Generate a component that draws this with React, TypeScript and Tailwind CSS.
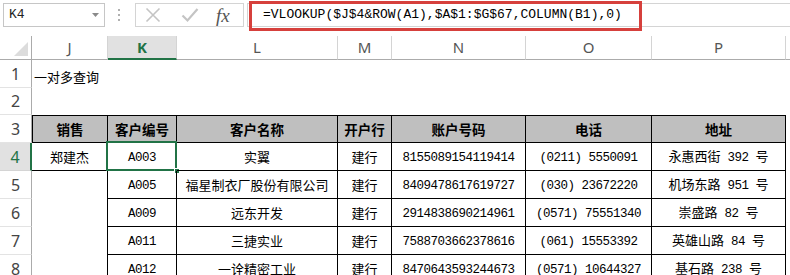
import type { ReactNode } from "react"

const cjk = "font-['Noto_Sans_CJK_SC','Noto_Sans',sans-serif]"
const mono = "font-['Liberation_Mono','Noto_Sans_CJK_SC',monospace]"

const HEADS = [
  { key: "J", w: "w-[76px]" },
  { key: "K", w: "w-[69px]" },
  { key: "L", w: "w-[161px]" },
  { key: "M", w: "w-[54px]" },
  { key: "N", w: "w-[134px]" },
  { key: "O", w: "w-[126px]" },
  { key: "P", w: "w-[134px]" },
]

const TITLES = ["销售", "客户编号", "客户名称", "开户行", "账户号码", "电话", "地址"]

const ROWS = [
  ["郑建杰", "A003", "实翼", "建行", "8155089154119414", "(0211) 5550091", "永惠西街 392 号"],
  ["", "A005", "福星制衣厂股份有限公司", "建行", "8409478617619727", "(030) 23672220", "机场东路 951 号"],
  ["", "A009", "远东开发", "建行", "2914838690214961", "(0571) 75551340", "崇盛路 82 号"],
  ["", "A011", "三捷实业", "建行", "7588703662378616", "(061) 15553392", "英雄山路 84 号"],
  ["", "A012", "一诠精密工业", "建行", "8470643593244673", "(0571) 10644327", "基石路 238 号"],
]

// ascii runs get the narrow mono face, the rest stays in the CJK face
const Txt = ({ s }: { s: string }) => (
  <span className="leading-none">
    {s.split(/([\x20-\x7e]+)/).map((part, i) =>
      /^[\x20-\x7e]+$/.test(part) ? (
        <span key={i} className={`${mono} text-[12.5px] tracking-[-0.5px] whitespace-pre`}>
          {part}
        </span>
      ) : (
        <span key={i}>{part}</span>
      ),
    )}
  </span>
)

const RowHead = ({ n, h, active }: { n: number; h: string; active?: boolean }) => (
  <div
    className={`flex w-[32px] shrink-0 items-end justify-center pb-[1px] text-[16px] font-['Noto_Sans',sans-serif] ${h} ${
      active
        ? "border-r-2 border-b border-r-[#217346] border-b-[#d4d4d4] bg-[#e1e1e1] text-[#217346]"
        : "border-r border-b border-r-[#ababab] border-b-[#e3e3e3] text-[#444]"
    }`}
  >
    {n}
  </div>
)

const FormulaBar = () => (
  <div className="flex h-[36px] items-start pt-[3px]">
    <div className="ml-[3px] flex h-[24px] w-[102px] items-center justify-between border border-[#c6c6c6] pr-[5px] pl-[5px]">
      <span className={`${mono} text-[13px] text-[#222]`}>K4</span>
      <svg width="7" height="5" viewBox="0 0 7 5">
        <path d="M0 0 L7 0 L3.5 4 Z" fill="#8a8a8a" />
      </svg>
    </div>
    <div className="ml-[12px] flex h-[24px] w-[4px] flex-col items-center justify-center gap-[3px]">
      <span className="h-[2px] w-[2px] bg-[#b0b0b0]" />
      <span className="h-[2px] w-[2px] bg-[#b0b0b0]" />
      <span className="h-[2px] w-[2px] bg-[#b0b0b0]" />
    </div>
    <div className="ml-[14px] flex h-[24px] w-[109px] items-center border border-[#d4d4d4]">
      <svg className="ml-[9px]" width="16" height="16" viewBox="0 0 16 16">
        <path d="M1.5 1.5 L14.5 14.5 M14.5 1.5 L1.5 14.5" stroke="#c4c4c4" strokeWidth="1.6" />
      </svg>
      <svg className="ml-[20px]" width="18" height="16" viewBox="0 0 18 16">
        <path d="M1.5 8.5 L6.5 13.5 L16.5 2" stroke="#c4c4c4" strokeWidth="2.2" fill="none" />
      </svg>
      <span className="ml-[17px] font-['Liberation_Serif',serif] text-[19px] leading-none text-[#555] italic">
        fx
      </span>
    </div>
    <div className="relative ml-[3px] flex h-[24px] flex-1 items-center border border-r-0 border-[#d4d4d4] pl-[15px]">
      <span className={`${mono} text-[13px] text-black`}>
        =VLOOKUP($J$4&amp;ROW(A1),$A$1:$G$67,COLUMN(B1),0)
      </span>
      <div className="absolute -top-[3px] left-[1px] h-[30px] w-[393px] border-[3px] border-[#d6403c]" />
    </div>
  </div>
)

const ColumnHeads = () => (
  <div className="flex h-[24px]">
    <div className="relative w-[32px] shrink-0 border-r border-b border-[#ababab]">
      <svg className="absolute right-[3px] bottom-[3px]" width="14" height="14" viewBox="0 0 14 14">
        <path d="M14 0 L14 14 L0 14 Z" fill="#dcdcdc" />
      </svg>
    </div>
    {HEADS.map((c) =>
      c.key === "K" ? (
        <div
          key={c.key}
          className={`${c.w} flex shrink-0 items-center justify-center border-r border-b-2 border-r-[#d4d4d4] border-b-[#217346] bg-[#e1e1e1] font-['Noto_Sans',sans-serif] text-[15px] font-bold text-[#217346]`}
        >
          {c.key}
        </div>
      ) : (
        <div
          key={c.key}
          className={`${c.w} flex shrink-0 items-center justify-center border-r border-b border-r-[#d4d4d4] border-b-[#ababab] font-['Noto_Sans',sans-serif] text-[15px] text-[#555]`}
        >
          {c.key}
        </div>
      ),
    )}
    <div className="flex-1 border-b border-[#ababab]" />
  </div>
)

const Cell = ({
  w,
  className,
  children,
}: {
  w: string
  className: string
  children?: ReactNode
}) => (
  <div className={`${w} relative flex shrink-0 items-center justify-center ${className}`}>
    {children}
  </div>
)

export default function App() {
  return (
    <div className={`h-[275px] w-[790px] overflow-hidden bg-white ${cjk} text-black`}>
      <FormulaBar />
      <ColumnHeads />

      <div className="flex">
        <RowHead n={1} h="h-[28px]" />
        <div className="flex flex-1 items-end pb-[2px] pl-[2px] text-[13px]">一对多查询</div>
      </div>
      <div className="flex">
        <RowHead n={2} h="h-[27px]" />
      </div>

      <div className="flex">
        <RowHead n={3} h="h-[28px]" />
        {HEADS.map((c, i) => (
          <Cell
            key={c.key}
            w={c.w}
            className={`h-[28px] border-t border-r border-b border-black bg-[#bfbfbf] text-[13.5px] font-bold ${
              i === 0 ? "border-l" : ""
            }`}
          >
            {TITLES[i]}
          </Cell>
        ))}
      </div>

      {ROWS.map((row, r) => (
        <div key={r} className="flex">
          <RowHead n={r + 4} h="h-[28px]" active={r === 0} />
          {row.map((v, i) => {
            const first = i === 0
            const border = first
              ? r === 0
                ? "border-r border-b border-black"
                : "border-r border-black"
              : "border-r border-b border-black"
            return (
              <Cell key={i} w={HEADS[i].w} className={`h-[28px] text-[13px] ${border}`}>
                <Txt s={v} />
                {r === 0 && i === 1 && (
                  <>
                    <div className="absolute -top-[2px] -right-[1px] -bottom-[1px] -left-[2px] border-2 border-[#217346]" />
                    <div className="absolute -right-[4px] -bottom-[4px] h-[6px] w-[6px] border border-white bg-[#217346]" />
                  </>
                )}
              </Cell>
            )
          })}
        </div>
      ))}
    </div>
  )
}
